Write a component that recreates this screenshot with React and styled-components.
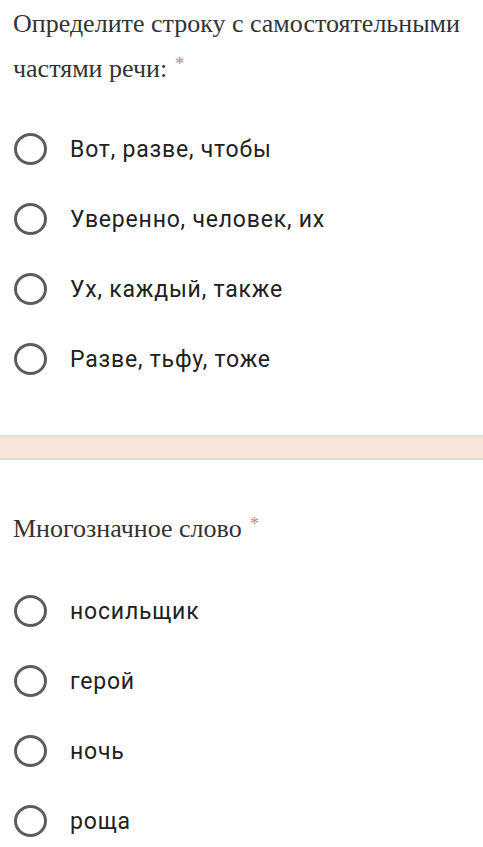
import React from "react";
import styled, { createGlobalStyle } from "styled-components";

const GlobalStyle = createGlobalStyle`
  html, body {
    margin: 0;
    padding: 0;
    background: #ffffff;
  }
`;

const Page = styled.div`
  width: 483px;
  height: 847px;
  overflow: hidden;
  background: #ffffff;
`;

const Question = styled.section`
  padding: ${(p) => p.$pad};
`;

const Title = styled.div`
  font-family: "Liberation Serif", "DejaVu Serif", serif;
  font-size: 26px;
  line-height: 40px;
  color: #333333;
`;

const Star = styled.span`
  color: #c9877a;
  font-size: 19px;
  vertical-align: 7px;
  margin-left: 8px;
`;

const Options = styled.div`
  display: flex;
  flex-direction: column;
  gap: ${(p) => p.$gap}px;
  margin-top: ${(p) => p.$top}px;
`;

const Option = styled.label`
  display: flex;
  align-items: center;
  height: 32px;
`;

const Circle = styled.span`
  box-sizing: border-box;
  width: 33px;
  height: 32px;
  border-radius: 50%;
  border: 3.5px solid #5c5c5c;
  flex: none;
  margin-left: 14px;
`;

const Label = styled.span`
  margin-left: 23px;
  font-family: Roboto, "Liberation Sans", sans-serif;
  font-size: 23px;
  letter-spacing: 0.8px;
  color: #212121;
`;

const Divider = styled.div`
  height: 21px;
  background: #f7e6d9;
  border-top: 2px solid #e2d9d1;
  border-bottom: 2px solid #e2d9d1;
`;

const first = ["Вот, разве, чтобы", "Уверенно, человек, их", "Ух, каждый, также", "Разве, тьфу, тоже"];
const second = ["носильщик", "герой", "ночь", "роща"];

export default function App() {
  return (
    <Page>
      <GlobalStyle />
      <Question $pad="4px 0 0 13px">
        <Title>
          Определите строку с самостоятельными
          <br />
          частями речи:<Star>*</Star>
        </Title>
      </Question>
      <Options $gap={38} $top={44}>
        {first.map((t) => (
          <Option key={t}>
            <Circle />
            <Label>{t}</Label>
          </Option>
        ))}
      </Options>
      <div style={{ height: 60 }} />
      <Divider />
      <Question $pad="44px 0 0 13px">
        <Title>
          Многозначное слово<Star>*</Star>
        </Title>
      </Question>
      <Options $gap={38} $top={46}>
        {second.map((t) => (
          <Option key={t}>
            <Circle />
            <Label>{t}</Label>
          </Option>
        ))}
      </Options>
    </Page>
  );
}
